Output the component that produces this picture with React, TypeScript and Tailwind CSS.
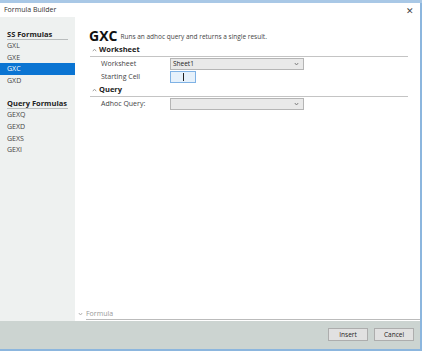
import React from "react";

const font = { fontFamily: '"Open Sans", "Noto Sans", sans-serif' };

function Chevron({ up = false, className = "" }: { up?: boolean; className?: string }) {
  return (
    <svg width="5" height="4" viewBox="0 0 5 4" className={className}>
      <path
        d={up ? "M0.8 3.2 L2.5 1.2 L4.2 3.2" : "M0.8 1 L2.5 3 L4.2 1"}
        fill="none"
        stroke="currentColor"
        strokeWidth="0.9"
      />
    </svg>
  );
}

function SideGroup({ title, items, active }: { title: string; items: string[]; active?: string }) {
  return (
    <div className="flex flex-col">
      <div className="mx-[7px] h-[11px] border-b border-[#b9bdbd] text-[7.5px] font-bold leading-[10px] text-[#222]">
        {title}
      </div>
      {items.map((it) => (
        <div
          key={it}
          className={`h-[11.6px] px-[7px] text-[7px] leading-[11.6px] ${
            it === active ? "bg-[#0a74d2] text-white" : "text-[#444]"
          }`}
        >
          {it}
        </div>
      ))}
    </div>
  );
}

function Section({ title }: { title: string }) {
  return (
    <div className="flex h-[13px] items-center gap-[2px] border-b border-[#c4c4c4] pl-[2px]">
      <Chevron up className="text-[#999]" />
      <span className="text-[7.5px] font-bold text-[#222]">{title}</span>
    </div>
  );
}

function Select({ value }: { value?: string }) {
  return (
    <div className="flex h-[12px] w-[134px] items-center justify-between border border-[#b5b5b5] bg-[#e9e9e9] px-[2px] text-[6.5px] text-[#222]">
      <span>{value}</span>
      <Chevron className="mr-[2px] text-[#777]" />
    </div>
  );
}

export default function App() {
  return (
    <div style={font} className="flex h-[351px] w-[422px] flex-col overflow-hidden bg-white">
      <div className="h-[3px] bg-[#a9c8e6]" />
      <div className="flex flex-1 flex-col border-b-2 border-r-2 border-[#8cb6de]">
        <div className="flex h-[14px] items-center justify-between pl-[4px] pr-[6px]">
          <span className="text-[7px] text-[#333]">Formula Builder</span>
          <span className="text-[9px] leading-none text-[#444]">✕</span>
        </div>
        <div className="flex flex-1">
          <div className="flex w-[75px] flex-col gap-[12px] bg-[#eef1f0] pt-[12px]">
            <SideGroup title="SS Formulas" items={["GXL", "GXE", "GXC", "GXD"]} active="GXC" />
            <SideGroup title="Query Formulas" items={["GEXQ", "GEXD", "GEXS", "GEXI"]} />
          </div>
          <div className="flex flex-1 flex-col pt-[11px]">
            <div className="flex h-[16px] items-center gap-[3px] pl-[14px]">
              <span className="text-[14px] font-bold leading-none text-[#111]">GXC</span>
              <span className="pt-[2px] text-[6.5px] text-[#444]">Runs an adhoc query and returns a single result.</span>
            </div>
            <div className="ml-[15px] mr-[12px] flex flex-col">
              <Section title="Worksheet" />
              <div className="mt-[1px] flex flex-col gap-[1px] pl-[11px]">
                <div className="flex items-center">
                  <span className="w-[69px] text-[7px] text-[#444]">Worksheet</span>
                  <Select value="Sheet1" />
                </div>
                <div className="flex items-center">
                  <span className="w-[69px] text-[7px] text-[#444]">Starting Cell</span>
                  <div className="flex h-[12px] w-[26px] items-center justify-center border border-[#7fb2e5] bg-[#e6f1fb]">
                    <div className="h-[8px] w-[1px] bg-[#222]" />
                  </div>
                </div>
              </div>
              <div className="mt-[1px]">
                <Section title="Query" />
              </div>
              <div className="mt-[1px] flex items-center pl-[11px]">
                <span className="w-[69px] text-[7px] text-[#444]">Adhoc Query:</span>
                <Select />
              </div>
            </div>
            <div className="mt-auto mb-[1px] ml-[3px] flex h-[12px] items-center gap-[3px]">
              <Chevron className="text-[#aaa]" />
              <span className="flex-1 border-b border-[#bbb] text-[7px] leading-[11px] text-[#999]">Formula</span>
            </div>
          </div>
        </div>
        <div className="flex h-[28px] items-start justify-end gap-[6px] bg-[#ccd4d1] pr-[6px] pt-[7px]">
          <button className="h-[13px] w-[40px] border border-[#adadad] bg-[#e1e1e1] text-[6.5px] text-[#222]">Insert</button>
          <button className="h-[13px] w-[40px] border border-[#adadad] bg-[#e1e1e1] text-[6.5px] text-[#222]">Cancel</button>
        </div>
      </div>
    </div>
  );
}
